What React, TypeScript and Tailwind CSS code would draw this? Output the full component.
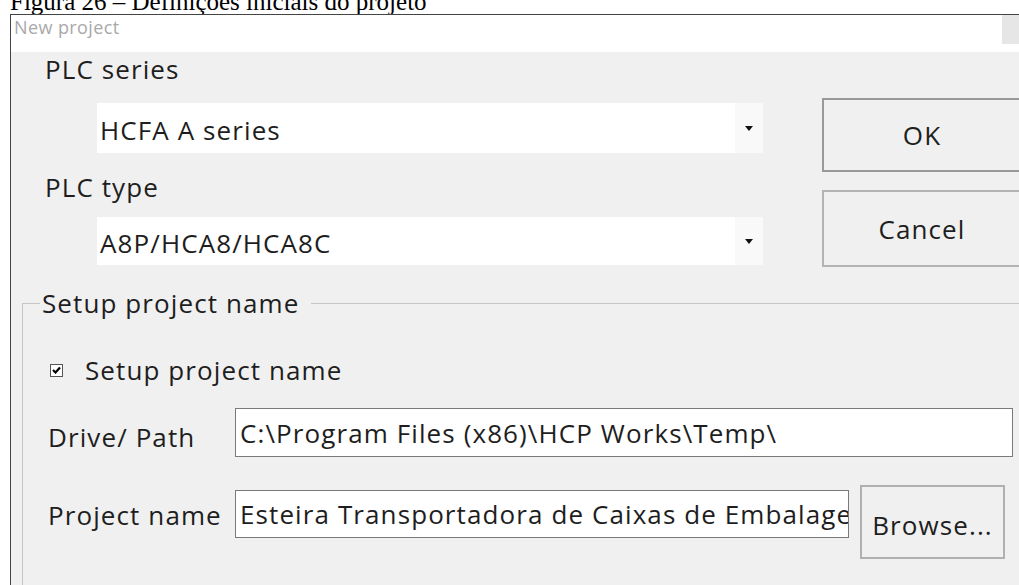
import React from 'react'

const ui = "font-['Open_Sans','Noto_Sans',sans-serif]";
const big = 'text-[26px] tracking-[1.1px] leading-[32px]';

function Combo({ value, className = '' }: { value: string; className?: string }) {
  return (
    <div className={`flex bg-white ${className}`}>
      <div className={`flex flex-1 items-center pl-[3px] pt-[4px] text-[#1e1e1e] ${big}`}>{value}</div>
      <div className="flex w-[28px] items-center justify-center bg-[#f9f9f9]">
        <svg width="8" height="5" viewBox="0 0 8 5">
          <path d="M0 0h8L4 5z" fill="#111" />
        </svg>
      </div>
    </div>
  );
}

function Field({ value, className = '' }: { value: string; className?: string }) {
  return (
    <div className={`flex items-center overflow-hidden whitespace-nowrap border border-[#7a7a7a] bg-white pl-[4px] text-[#1e1e1e] ${big} ${className}`}>
      {value}
    </div>
  );
}

export default function App() {
  return (
    <div className={`flex h-[585px] w-[1019px] flex-col overflow-hidden bg-white ${ui}`}>
      {/* figure caption, cut at the top */}
      <div className="h-[14px] shrink-0 pl-[10px] font-['Liberation_Serif',serif] text-[25px] leading-[25px] text-black">
        <div className="mt-[-11px] whitespace-nowrap">Figura 26 – Definições iniciais do projeto</div>
      </div>

      <div className="ml-[10px] flex flex-1 flex-col border-l border-t border-[#444]">
        {/* title bar */}
        <div className="flex h-[37px] shrink-0 justify-between bg-white">
          <div className="pl-[3px] pt-[1px] text-[18px] leading-[22px] tracking-[0.4px] text-[#a9a9a9]">New project</div>
          <div className="h-[29px] w-[17px] bg-[#e6e6e6]" />
        </div>

        <div className="flex flex-1 flex-col bg-[#f0f0f0] text-[#1e1e1e]">
          <div className="flex">
            <div className="w-[752px] shrink-0">
              <div className={`pl-[34px] pt-[1px] ${big}`}>PLC series</div>
              <Combo value="HCFA A series" className="ml-[86px] mt-[18px] h-[50px]" />
              <div className={`mt-[18px] pl-[34px] ${big}`}>PLC type</div>
              <Combo value="A8P/HCA8/HCA8C" className="ml-[86px] mt-[14px] h-[48px]" />
            </div>
            <div className="ml-[59px] flex shrink-0 flex-col">
              <button className={`mt-[46px] h-[74px] w-[220px] border-2 border-[#999] pr-[20px] ${big}`}>
                OK
              </button>
              <button className={`mt-[18px] h-[77px] w-[220px] border-2 border-[#b3b3b3] pr-[20px] ${big}`}>
                Cancel
              </button>
            </div>
          </div>

          <fieldset className="ml-[11px] mt-[20px] flex-1 border-l border-t border-[#c6c6c6]">
            <legend className={`ml-[17px] pl-[2px] pr-[12px] ${big}`}>Setup project name</legend>

            <div className={`mt-[35px] flex items-center pl-[27px] ${big}`}>
              <span className="flex h-[13px] w-[13px] items-center justify-center border border-[#555] bg-white">
                <svg width="9" height="8" viewBox="0 0 9 8">
                  <path d="M1 4l2.5 2.5L8 1.5" fill="none" stroke="#000" strokeWidth="2.2" />
                </svg>
              </span>
              <span className="ml-[22px]">Setup project name</span>
            </div>

            <div className="mt-[22px] flex items-center">
              <div className={`w-[212px] pl-[25px] pt-[9px] ${big}`}>Drive/ Path</div>
              <Field value="C:\Program Files (x86)\HCP Works\Temp\" className="h-[49px] w-[778px]" />
            </div>

            <div className="mt-[28px] flex items-start">
              <div className={`mt-[14px] w-[212px] pl-[25px] ${big}`}>Project name</div>
              <Field value="Esteira Transportadora de Caixas de Embalagem" className="mt-[5px] h-[48px] w-[614px]" />
              <button className={`ml-[11px] h-[74px] w-[145px] border-2 border-[#b0b0b0] pt-[6px] ${big}`}>
                Browse...
              </button>
            </div>
          </fieldset>
        </div>
      </div>
    </div>
  );
}
